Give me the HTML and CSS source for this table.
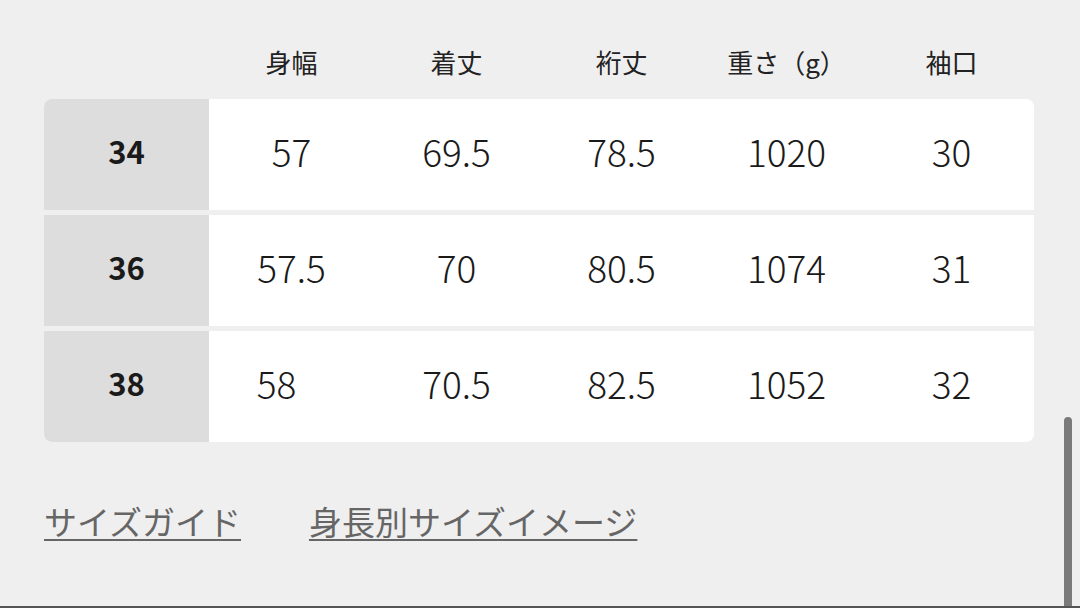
FILE: index.html
```html
<!DOCTYPE html>
<html lang="ja">
<head>
<meta charset="utf-8">
<link rel="stylesheet" href="styles.css">
</head>
<body>
<div class="page">
  <div class="head">
    <div class="hcell"></div>
    <div class="hcell">身幅</div>
    <div class="hcell">着丈</div>
    <div class="hcell">裄丈</div>
    <div class="hcell">重さ<span class="po">（</span>g<span class="pc">）</span></div>
    <div class="hcell">袖口</div>
  </div>
  <div class="table">
    <div class="row first">
      <div class="size">34</div>
      <div class="val">57</div>
      <div class="val">69.5</div>
      <div class="val">78.5</div>
      <div class="val">1020</div>
      <div class="val">30</div>
    </div>
    <div class="row">
      <div class="size">36</div>
      <div class="val">57.5</div>
      <div class="val">70</div>
      <div class="val">80.5</div>
      <div class="val">1074</div>
      <div class="val">31</div>
    </div>
    <div class="row last">
      <div class="size">38</div>
      <div class="val shift">58</div>
      <div class="val">70.5</div>
      <div class="val">82.5</div>
      <div class="val">1052</div>
      <div class="val">32</div>
    </div>
  </div>
  <div class="links">
    <a class="link" href="#">サイズガイド</a>
    <a class="link" href="#">身長別サイズイメージ</a>
  </div>
  <div class="scrollbar"></div>
</div>
</body>
</html>
```

FILE: styles.css
```css
html, body {
  margin: 0;
  padding: 0;
  background: #efefef;
}
body {
  font-family: "Noto Sans CJK JP", "Noto Sans", sans-serif;
  color: #1c1c1c;
}
.page {
  position: relative;
  height: 608px;
  box-sizing: border-box;
  border-bottom: 2px solid #555;
  padding: 34px 0 0 44px;
  overflow: hidden;
}
.head {
  display: grid;
  grid-template-columns: repeat(6, 165px);
  height: 56px;
  align-items: center;
  margin-bottom: 9px;
}
.hcell {
  text-align: center;
  font-size: 26px;
  line-height: 30px;
  font-weight: 400;
  color: #222;
  white-space: nowrap;
}
.po, .pc {
  display: inline-block;
  width: 26px;
}
.po {
  text-align: right;
}
.pc {
  text-align: left;
}
.table {
  display: flex;
  flex-direction: column;
  gap: 5px;
  width: 990px;
}
.row {
  display: grid;
  grid-template-columns: repeat(6, 165px);
  height: 111px;
  background: #fff;
  overflow: hidden;
}
.row.first {
  border-radius: 8px 8px 0 0;
}
.row.last {
  border-radius: 0 0 8px 8px;
}
.size {
  background: #dddddd;
  display: flex;
  align-items: center;
  justify-content: center;
  padding-bottom: 8px;
  font-size: 31px;
  font-weight: 700;
  color: #1a1a1a;
}
.val {
  display: flex;
  align-items: center;
  justify-content: center;
  padding-bottom: 8px;
  font-size: 37px;
  font-weight: 300;
  color: #1a1a1a;
}
.val.shift {
  padding-right: 30px;
}
.links {
  display: flex;
  gap: 68px;
  margin-top: 59px;
}
.link {
  font-size: 33px;
  line-height: 40px;
  color: #666;
  text-decoration: underline;
  text-decoration-thickness: 2px;
  text-underline-offset: 4px;
}
.scrollbar {
  position: absolute;
  right: 8px;
  top: 417px;
  width: 8px;
  height: 200px;
  border-radius: 4px;
  background: #7a7a7a;
}
```
